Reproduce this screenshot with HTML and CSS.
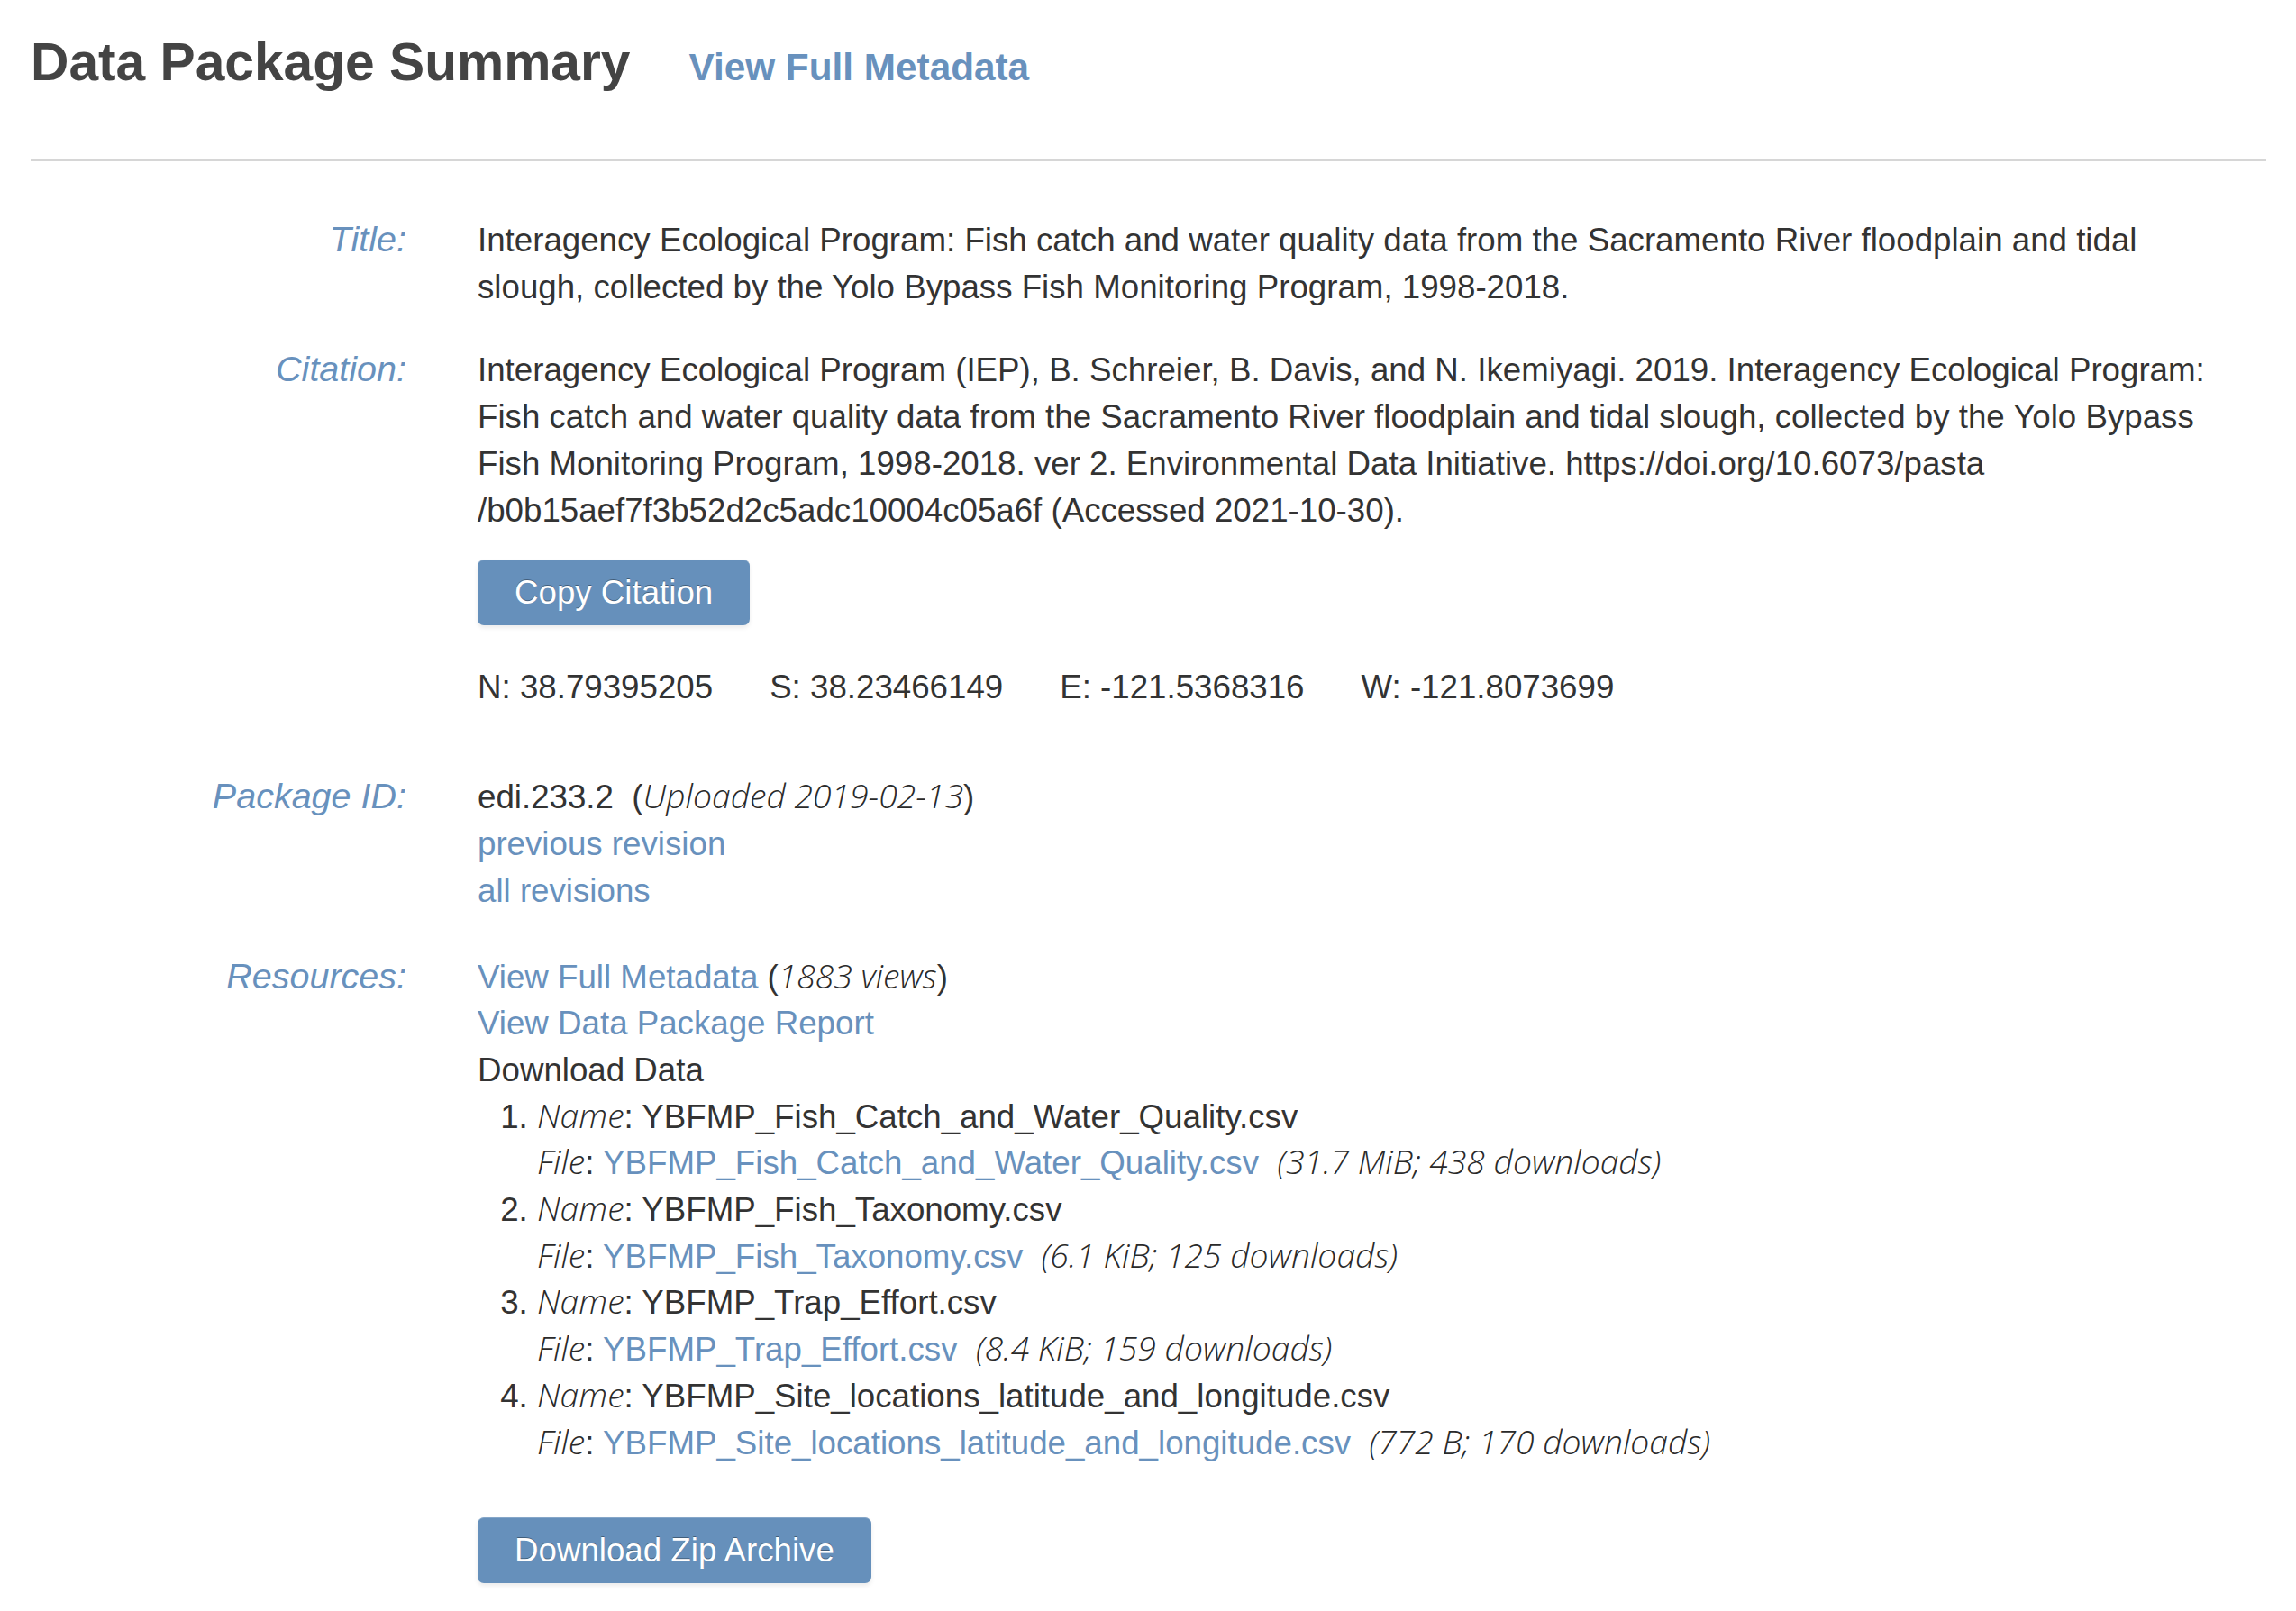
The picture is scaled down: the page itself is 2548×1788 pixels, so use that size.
FILE: index.html
```html
<!DOCTYPE html>
<html lang="en">
<head>
<meta charset="utf-8">
<title>Data Package Summary</title>
<link rel="stylesheet" href="styles.css">
</head>
<body>
<div class="page">
  <header class="summary-header">
    <h1 class="summary-title">Data Package Summary</h1>
    <a class="header-link" href="#">View Full Metadata</a>
  </header>
  <hr class="divider">
  <dl class="summary">
    <dt class="label">Title:</dt>
    <dd class="value">Interagency Ecological Program: Fish catch and water quality data from the Sacramento River floodplain and tidal slough, collected by the Yolo Bypass Fish Monitoring Program, 1998-2018.</dd>

    <dt class="label">Citation:</dt>
    <dd class="value">
      <div class="citation">Interagency Ecological Program (IEP), B. Schreier, B. Davis, and N. Ikemiyagi. 2019. Interagency Ecological Program: Fish catch and water quality data from the Sacramento River floodplain and tidal slough, collected by the Yolo Bypass Fish Monitoring Program, 1998-2018. ver 2. Environmental Data Initiative. https://doi.org/10.6073/pasta<wbr>/b0b15aef7f3b52d2c5adc10004c05a6f (Accessed 2021-10-30).</div>
      <button class="btn" type="button">Copy Citation</button>
      <div class="coords">
        <span>N: 38.79395205</span>
        <span>S: 38.23466149</span>
        <span>E: -121.5368316</span>
        <span>W: -121.8073699</span>
      </div>
    </dd>

    <dt class="label">Package ID:</dt>
    <dd class="value value-package">
      <div>edi.233.2&nbsp; (<em class="note">Uploaded 2019-02-13</em>)</div>
      <div><a class="link" href="#">previous revision</a></div>
      <div><a class="link" href="#">all revisions</a></div>
    </dd>

    <dt class="label">Resources:</dt>
    <dd class="value">
      <div><a class="link" href="#">View Full Metadata</a> (<em class="note">1883 views</em>)</div>
      <div><a class="link" href="#">View Data Package Report</a></div>
      <div>Download Data</div>
      <ol class="files">
        <li>
          <div><em class="note">Name</em>: YBFMP_Fish_Catch_and_Water_Quality.csv</div>
          <div><em class="note">File</em>: <a class="link" href="#">YBFMP_Fish_Catch_and_Water_Quality.csv</a>&nbsp; <em class="note">(31.7 MiB; 438 downloads)</em></div>
        </li>
        <li>
          <div><em class="note">Name</em>: YBFMP_Fish_Taxonomy.csv</div>
          <div><em class="note">File</em>: <a class="link" href="#">YBFMP_Fish_Taxonomy.csv</a>&nbsp; <em class="note">(6.1 KiB; 125 downloads)</em></div>
        </li>
        <li>
          <div><em class="note">Name</em>: YBFMP_Trap_Effort.csv</div>
          <div><em class="note">File</em>: <a class="link" href="#">YBFMP_Trap_Effort.csv</a>&nbsp; <em class="note">(8.4 KiB; 159 downloads)</em></div>
        </li>
        <li>
          <div><em class="note">Name</em>: YBFMP_Site_locations_latitude_and_longitude.csv</div>
          <div><em class="note">File</em>: <a class="link" href="#">YBFMP_Site_locations_latitude_and_longitude.csv</a>&nbsp; <em class="note">(772 B; 170 downloads)</em></div>
        </li>
      </ol>
      <button class="btn btn-zip" type="button">Download Zip Archive</button>
    </dd>
  </dl>
</div>
</body>
</html>
```

FILE: styles.css
```css
html, body {
  margin: 0;
  padding: 0;
  background: #ffffff;
}

body {
  font-family: "Liberation Sans", Helvetica, Arial, sans-serif;
  font-size: 36.7px;
  line-height: 51.7px;
  color: #333333;
}

.page {
  padding: 40px 33px 60px 34px;
}

.summary-header {
  display: flex;
  align-items: baseline;
  gap: 65px;
  height: 58px;
}

.summary-title {
  margin: 0;
  font-size: 58.7px;
  line-height: 58px;
  font-weight: bold;
  color: #444444;
}

.header-link {
  font-size: 42.3px;
  font-weight: bold;
  color: #6891bd;
  text-decoration: none;
}

.divider {
  margin: 79px 0 0 0;
  border: 0;
  border-top: 2px solid #d6d6d6;
  height: 0;
}

.summary {
  display: grid;
  grid-template-columns: 417px 1fr;
  column-gap: 79px;
  row-gap: 40px;
  align-items: baseline;
  margin: 61px 0 0 0;
}

.label {
  margin: 0;
  text-align: right;
  font-style: italic;
  font-size: 39.5px;
  color: #6891bd;
}

.value {
  margin: 0;
  padding-right: 40px;
}

.value-package {
  margin-bottom: 3px;
}

.link {
  color: #6891bd;
  text-decoration: none;
}

.note {
  font-family: "Open Sans", "Liberation Sans", sans-serif;
  font-style: italic;
  font-weight: 300;
  font-size: 37.3px;
  line-height: 1;
  color: #2a2a2a;
}

.btn {
  display: block;
  margin-top: 29px;
  padding: 10px 41px;
  font-family: "Liberation Sans", Helvetica, Arial, sans-serif;
  font-size: 36.7px;
  line-height: 52px;
  color: #ffffff;
  background: #6690bb;
  border: 0;
  border-top: 1px solid #86a7c9;
  border-radius: 7px;
  text-shadow: 0 -1px 0 rgba(0, 0, 0, 0.35);
  box-shadow: 0 3px 5px rgba(0, 0, 0, 0.08);
  cursor: pointer;
}

.coords {
  display: flex;
  gap: 63px;
  margin-top: 42.5px;
  margin-bottom: 30px;
}

.files {
  margin: 0;
  padding-left: 66px;
}

.files li {
  padding: 0;
}

.btn-zip {
  margin-top: 57px;
}
```
